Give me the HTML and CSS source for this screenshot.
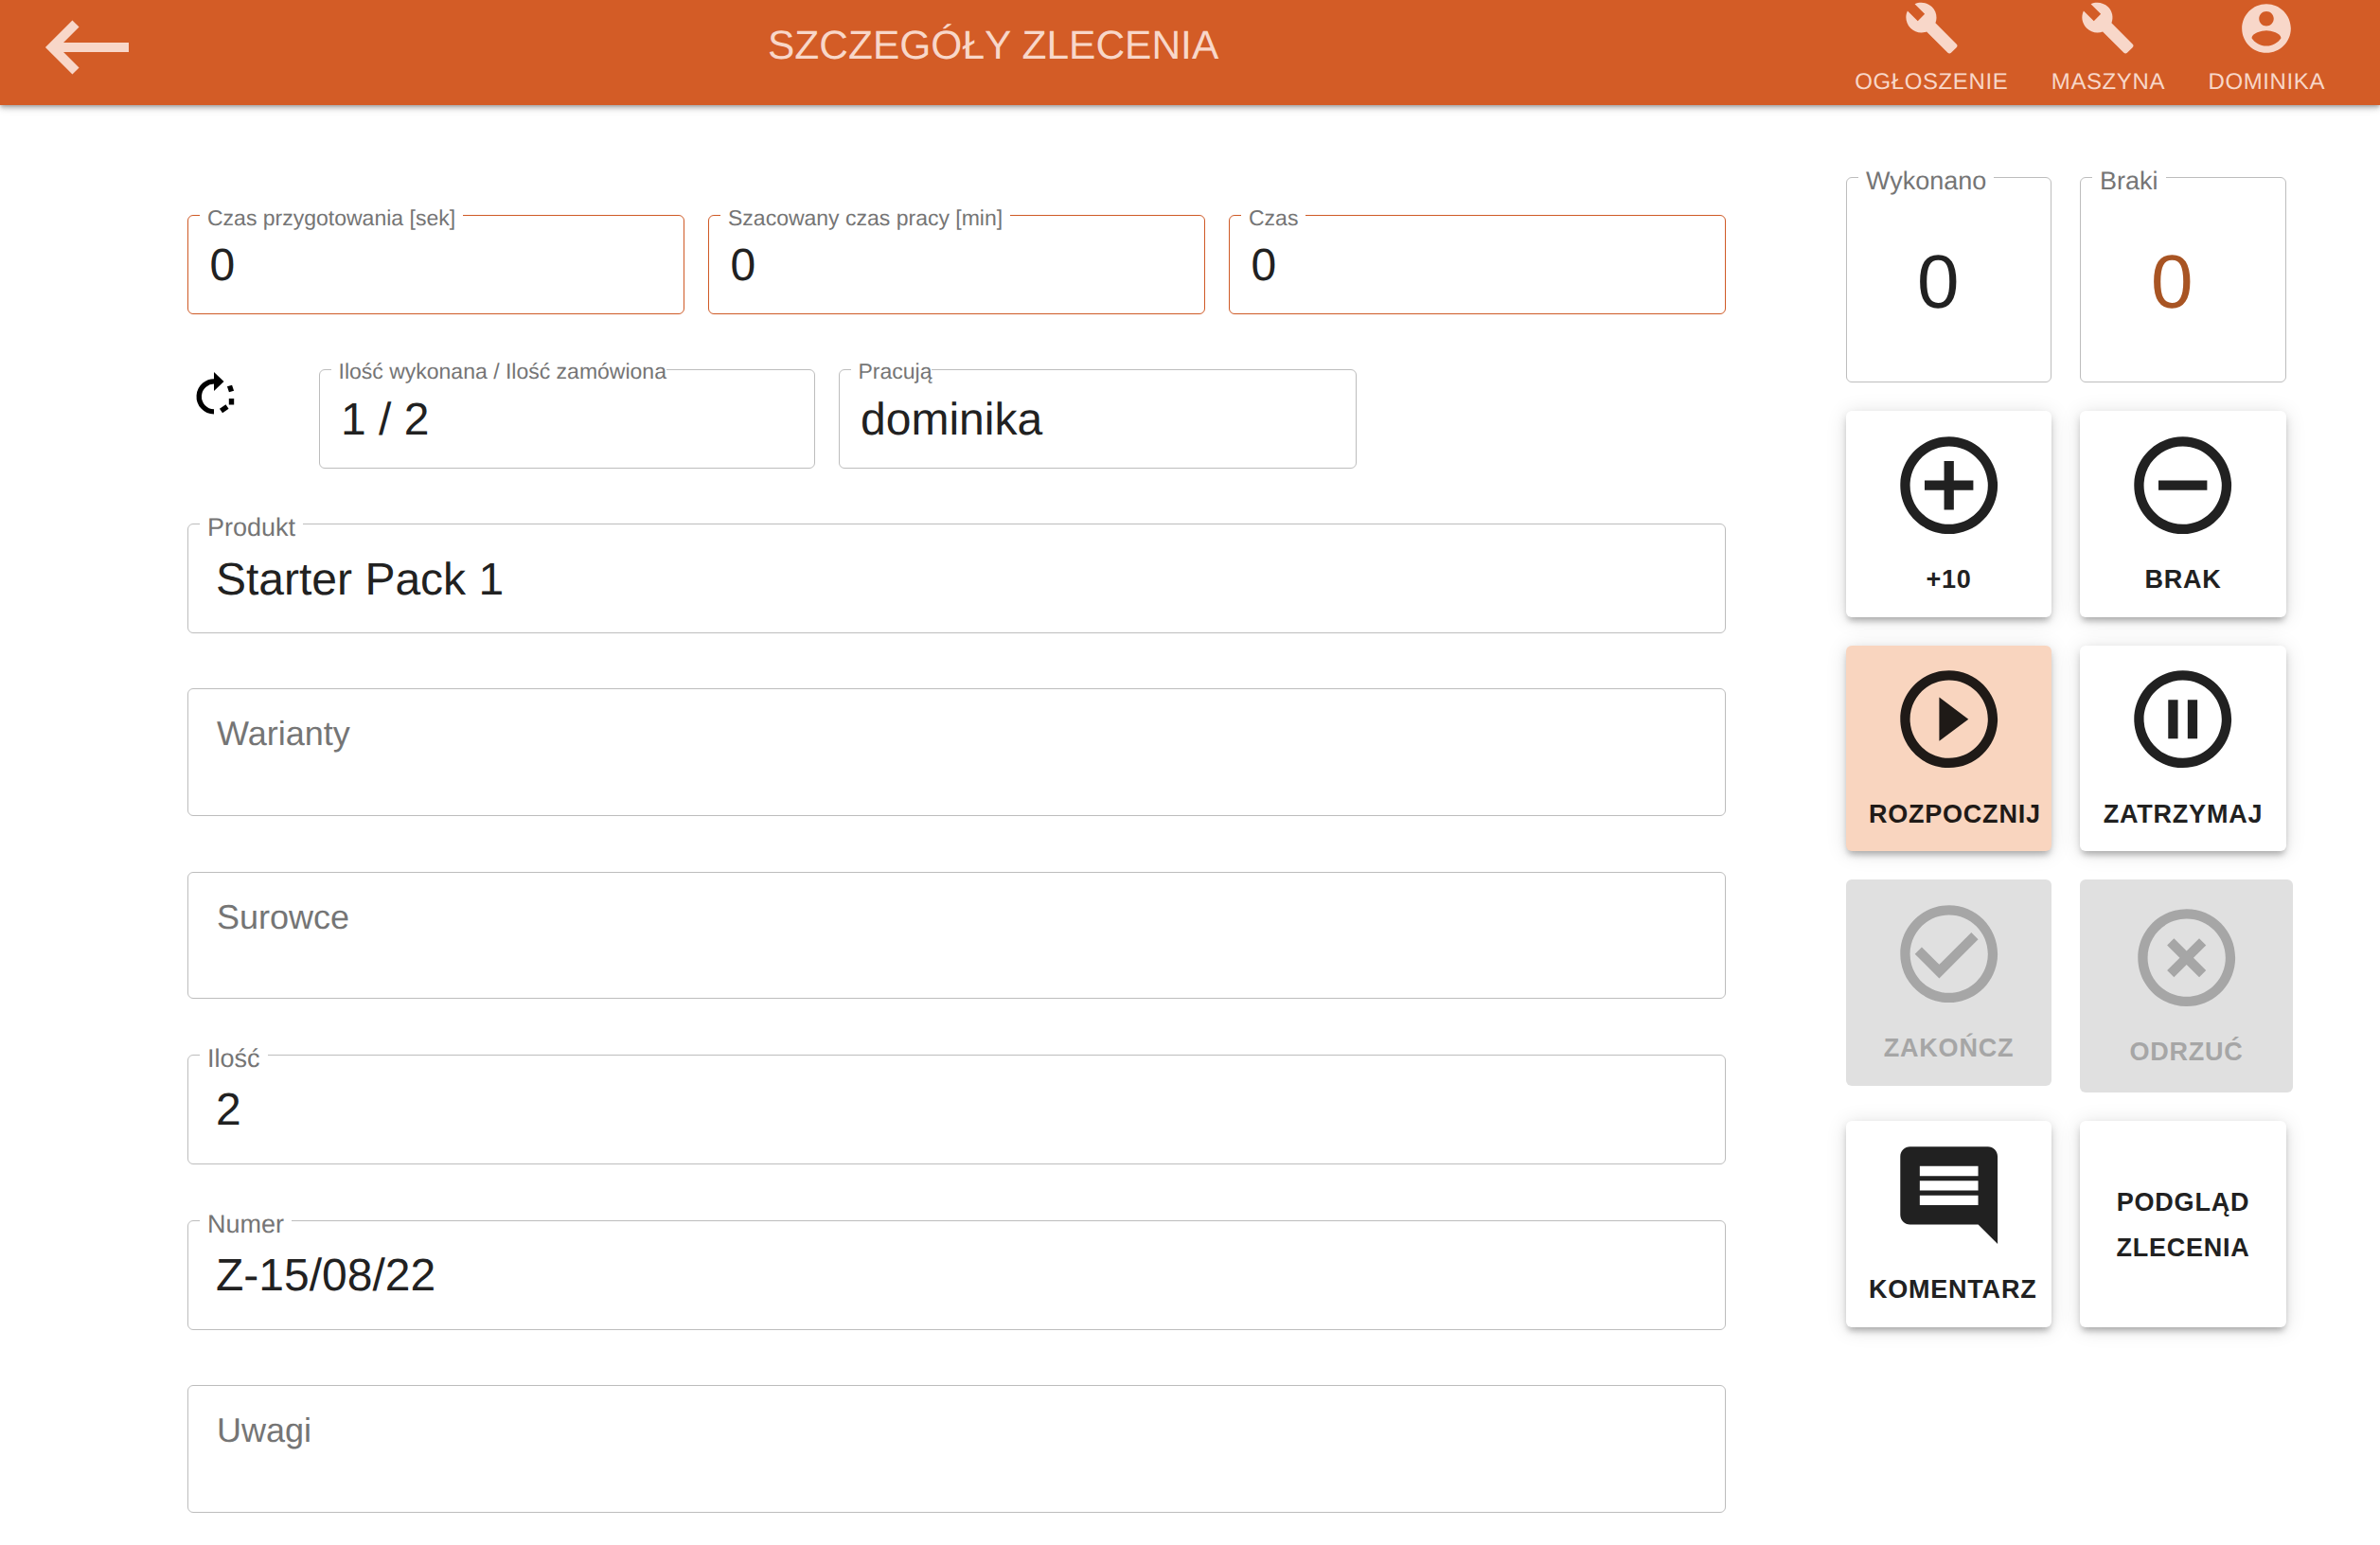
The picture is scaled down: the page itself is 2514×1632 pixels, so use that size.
FILE: index.html
```html
<!DOCTYPE html>
<html lang="pl">
<head>
<meta charset="utf-8">
<title>Szczegóły zlecenia</title>
<link rel="stylesheet" href="styles.css">
</head>
<body>
<header class="topbar">
  <svg class="back" viewBox="0 0 90 60" aria-hidden="true"><path d="M89 30H9M33 5L8 30l25 25" fill="none" stroke="currentColor" stroke-width="10"/></svg>
  <h1 class="title">SZCZEGÓŁY ZLECENIA</h1>
  <nav class="nav">
    <div class="nav-item">
      <div class="nav-icon"><svg class="wrench" viewBox="0 0 24 24"><path d="M22.7 19l-9.1-9.1c.9-2.3.4-5-1.5-6.9-2-2-5-2.4-7.4-1.3L9 6 6 9 1.6 4.7C.4 7.1.9 10.1 2.9 12.1c1.9 1.9 4.6 2.4 6.9 1.5l9.1 9.1c.4.4 1 .4 1.4 0l2.3-2.3c.5-.4.5-1.1.1-1.4z"/></svg></div>
      <span class="nav-label">OGŁOSZENIE</span>
    </div>
    <div class="nav-item">
      <div class="nav-icon"><svg class="wrench" viewBox="0 0 24 24"><path d="M22.7 19l-9.1-9.1c.9-2.3.4-5-1.5-6.9-2-2-5-2.4-7.4-1.3L9 6 6 9 1.6 4.7C.4 7.1.9 10.1 2.9 12.1c1.9 1.9 4.6 2.4 6.9 1.5l9.1 9.1c.4.4 1 .4 1.4 0l2.3-2.3c.5-.4.5-1.1.1-1.4z"/></svg></div>
      <span class="nav-label">MASZYNA</span>
    </div>
    <div class="nav-item">
      <div class="nav-icon"><svg class="account" viewBox="0 0 24 24"><path d="M12 2C6.48 2 2 6.48 2 12s4.48 10 10 10 10-4.48 10-10S17.52 2 12 2zm0 3c1.66 0 3 1.34 3 3s-1.34 3-3 3-3-1.34-3-3 1.34-3 3-3zm0 14.2c-2.5 0-4.71-1.28-6-3.22.03-1.99 4-3.08 6-3.08 1.99 0 5.97 1.09 6 3.08-1.29 1.94-3.5 3.22-6 3.22z"/></svg></div>
      <span class="nav-label">DOMINIKA</span>
    </div>
  </nav>
</header>

<main class="main">
  <section class="form">
    <div class="row row-times">
      <div class="field field-sm active"><span class="legend legend-sm">Czas przygotowania [sek]</span><div class="value value-sm">0</div></div>
      <div class="field field-sm active"><span class="legend legend-sm">Szacowany czas pracy [min]</span><div class="value value-sm">0</div></div>
      <div class="field field-sm active"><span class="legend legend-sm">Czas</span><div class="value value-sm">0</div></div>
    </div>
    <div class="row row-progress">
      <svg class="refresh" viewBox="0 0 65 70" aria-hidden="true">
        <path class="refresh-arc" d="M31 23A16 16 0 1 0 29 54.9"/>
        <path class="refresh-dash" d="M36.5 54L43 49.5M47.5 41L47.5 47.5M45.5 27.5L47.5 33.5"/>
        <path d="M29 13L39.5 23 29 33z"/>
      </svg>
      <div class="field field-sm field-progress"><span class="legend legend-sm legend-tight">Ilość wykonana / Ilość zamówiona</span><div class="value value-sm value-low">1 / 2</div></div>
      <div class="field field-sm field-workers"><span class="legend legend-sm legend-tight">Pracują</span><div class="value value-sm value-low">dominika</div></div>
    </div>
    <div class="field field-product"><span class="legend">Produkt</span><div class="value">Starter Pack 1</div></div>
    <div class="field field-note"><div class="placeholder">Warianty</div></div>
    <div class="field field-note"><div class="placeholder">Surowce</div></div>
    <div class="field field-qty"><span class="legend">Ilość</span><div class="value">2</div></div>
    <div class="field field-qty"><span class="legend">Numer</span><div class="value">Z-15/08/22</div></div>
    <div class="field field-note"><div class="placeholder">Uwagi</div></div>
  </section>

  <aside class="panel">
    <div class="stat"><span class="legend">Wykonano</span><div class="stat-value">0</div></div>
    <div class="stat"><span class="legend">Braki</span><div class="stat-value stat-bad">0</div></div>

    <button class="btn"><svg class="btn-icon" viewBox="0 0 24 24"><path d="M13 7h-2v4H7v2h4v4h2v-4h4v-2h-4V7zm-1-5C6.48 2 2 6.48 2 12s4.48 10 10 10 10-4.48 10-10S17.52 2 12 2zm0 18c-4.41 0-8-3.59-8-8s3.59-8 8-8 8 3.59 8 8-3.59 8-8 8z"/></svg><span class="btn-label">+10</span></button>
    <button class="btn"><svg class="btn-icon" viewBox="0 0 24 24"><path d="M7 11v2h10v-2H7zm5-9C6.48 2 2 6.48 2 12s4.48 10 10 10 10-4.48 10-10S17.52 2 12 2zm0 18c-4.41 0-8-3.59-8-8s3.59-8 8-8 8 3.59 8 8-3.59 8-8 8z"/></svg><span class="btn-label">BRAK</span></button>

    <button class="btn btn-on"><svg class="btn-icon" viewBox="0 0 24 24"><path d="M10 16.5l6-4.5-6-4.5v9zM12 2C6.48 2 2 6.48 2 12s4.48 10 10 10 10-4.48 10-10S17.52 2 12 2zm0 18c-4.41 0-8-3.59-8-8s3.59-8 8-8 8 3.59 8 8-3.59 8-8 8z"/></svg><span class="btn-label">ROZPOCZNIJ</span></button>
    <button class="btn"><svg class="btn-icon" viewBox="0 0 24 24"><path d="M9 16h2V8H9v8zm3-14C6.48 2 2 6.48 2 12s4.48 10 10 10 10-4.48 10-10S17.52 2 12 2zm0 18c-4.41 0-8-3.59-8-8s3.59-8 8-8 8 3.59 8 8-3.59 8-8 8zm1-4h2V8h-2v8z"/></svg><span class="btn-label">ZATRZYMAJ</span></button>

    <button class="btn btn-off"><svg class="btn-icon" viewBox="0 0 24 24"><path d="M16.59 7.58L10 14.17l-3.59-3.58L5 12l5 5 8-8zM12 2C6.48 2 2 6.48 2 12s4.48 10 10 10 10-4.48 10-10S17.52 2 12 2zm0 18c-4.42 0-8-3.58-8-8s3.58-8 8-8 8 3.58 8 8-3.58 8-8 8z"/></svg><span class="btn-label">ZAKOŃCZ</span></button>
    <button class="btn btn-off btn-big"><svg class="btn-icon" viewBox="0 0 24 24"><path d="M14.59 8L12 10.59 9.41 8 8 9.41 10.59 12 8 14.59 9.41 16 12 13.41 14.59 16 16 14.59 13.41 12 16 9.41 14.59 8zM12 2C6.47 2 2 6.47 2 12s4.47 10 10 10 10-4.47 10-10S17.53 2 12 2zm0 18c-4.41 0-8-3.59-8-8s3.59-8 8-8 8 3.59 8 8-3.59 8-8 8z"/></svg><span class="btn-label">ODRZUĆ</span></button>

    <button class="btn"><svg class="btn-icon" viewBox="0 0 24 24"><path d="M21.99 4c0-1.1-.89-2-1.99-2H4c-1.1 0-2 .9-2 2v12c0 1.1.9 2 2 2h14l4 4-.01-18zM18 14H6v-2h12v2zm0-3H6V9h12v2zm0-3H6V6h12v2z"/></svg><span class="btn-label">KOMENTARZ</span></button>
    <button class="btn"><span class="btn-label btn-label-wrap">PODGLĄD<br>ZLECENIA</span></button>
  </aside>
</main>
</body>
</html>
```

FILE: styles.css
```css
* { box-sizing: border-box; }

html, body {
  margin: 0;
  background: #fff;
  color: #212121;
  font-family: "Liberation Sans", Arial, sans-serif;
  text-rendering: geometricPrecision;
}

body { overflow: hidden; height: 1632px; }

.topbar {
  position: relative;
  z-index: 2;
  display: flex;
  align-items: flex-start;
  height: 111px;
  background: #d35c26;
  color: #f8d7c9;
  box-shadow: 0 2px 4px -1px rgba(0, 0, 0, .25), 0 4px 5px rgba(0, 0, 0, .14), 0 1px 12px rgba(0, 0, 0, .12);
}

.back {
  flex: none;
  width: 90px;
  height: 60px;
  margin: 20px 0 0 47px;
}

.title {
  margin: 28px 0 0 674px;
  font-size: 42.5px;
  font-weight: 400;
  line-height: 1;
  white-space: nowrap;
}

.nav {
  display: flex;
  gap: 45.5px;
  margin-left: auto;
  padding-right: 58px;
}

.nav-item {
  display: flex;
  flex-direction: column;
  align-items: center;
}

.nav-icon {
  display: flex;
  align-items: center;
  justify-content: center;
  height: 60px;
}

.nav-icon svg { fill: currentColor; flex: none; }
.wrench { width: 59px; height: 59px; margin-bottom: 2px; }
.account { width: 62px; height: 62px; }

.nav-label {
  margin-top: 15px;
  font-size: 24px;
  line-height: 1;
  letter-spacing: .6px;
  white-space: nowrap;
}

.main {
  display: flex;
  align-items: flex-start;
}

.form {
  flex: none;
  display: flex;
  flex-direction: column;
  gap: 58.5px;
  width: 1625px;
  margin: 116px 0 0 198px;
}

.row { display: flex; }

.row-times {
  gap: 25px;
  margin-bottom: -.6px;
}
.row-times .field { flex: 1 1 0; }

.row-progress {
  position: relative;
  gap: 25px;
  padding-left: 138.5px;
}

.refresh {
  position: absolute;
  left: -1.5px;
  top: -10px;
  width: 65px;
  height: 70px;
  fill: #000;
}

.refresh-arc, .refresh-dash {
  fill: none;
  stroke: #000;
  stroke-width: 5.4;
}

.field {
  position: relative;
  border: 1px solid #bdbdbd;
  border-radius: 6px;
}

.field.active { border-color: #cf5a26; }

.field-sm { height: 105px; }
.field-progress { width: 524px; }
.field-workers { width: 547px; }

.field-product { height: 115.4px; }
.field-note { height: 134.8px; }
.field-qty { height: 116.2px; }

.legend {
  position: absolute;
  left: 12px;
  top: -10px;
  padding: 0 8px;
  background: #fff;
  color: #757575;
  font-size: 27px;
  line-height: 1;
  white-space: nowrap;
}

.legend-sm {
  top: -9.5px;
  font-size: 23px;
}

.legend-tight {
  padding-right: 0;
}

.value {
  padding: 34.4px 0 0 29px;
  font-size: 48px;
  line-height: 1;
  white-space: nowrap;
}

.value-sm {
  padding: 28.5px 0 0 22.5px;
}

.value-low { padding-top: 29.5px; }

.placeholder {
  padding: 29px 0 0 30px;
  color: #757575;
  font-size: 36px;
  line-height: 1;
}

.panel {
  flex: none;
  display: grid;
  grid-template-columns: 217px 218px;
  column-gap: 30px;
  row-gap: 30px;
  align-items: start;
  margin: 76px 0 0 127px;
}

.stat {
  position: relative;
  height: 217px;
  border: 1px solid #bdbdbd;
  border-radius: 6px;
}

.stat-value {
  padding: 69.5px 0 0 74px;
  font-size: 80px;
  line-height: 1;
}

.stat-bad { color: #a85423; }

.btn {
  display: flex;
  flex-direction: column;
  align-items: center;
  justify-content: center;
  gap: 15px;
  width: 100%;
  height: 217.7px;
  padding: 1.4px 24px 0;
  border: 0;
  border-radius: 6px;
  background: #fff;
  color: #212121;
  font-family: inherit;
  box-shadow: 0 6px 6px -3px rgba(0, 0, 0, .2), 0 4px 8px rgba(0, 0, 0, .12), 0 2px 22px rgba(0, 0, 0, .12);
}

.btn-on { background: #f9d5bf; color: #1f1a17; }

.btn-off {
  background: #e0e0e0;
  color: #a6a6a6;
  box-shadow: none;
}

.btn-big { width: 225px; height: 225px; }

.btn-icon {
  flex: none;
  width: 123.4px;
  height: 123.4px;
  fill: currentColor;
}

.btn-label {
  align-self: stretch;
  font-size: 27px;
  font-weight: 700;
  line-height: 1.75;
  letter-spacing: .77px;
  text-align: center;
  white-space: nowrap;
}

.btn-label-wrap { padding-top: 1.5px; }
```
